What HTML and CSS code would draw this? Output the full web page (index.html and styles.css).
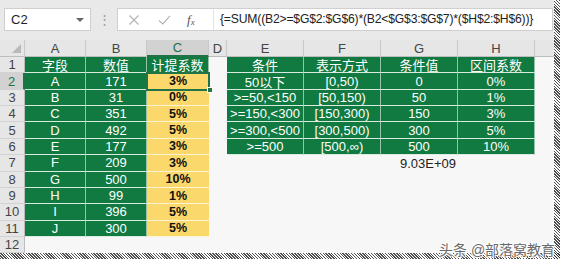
FILE: index.html
```html
<!DOCTYPE html>
<html>
<head>
<meta charset="utf-8">
<link rel="stylesheet" href="styles.css">
</head>
<body>
<div class="frame">
  <div class="toolbar">
    <div class="namebox"><span>C2</span><span class="caret"></span></div>
    <div class="grip">⋮</div>
    <div class="fbar">
      <div class="fbtns">
        <svg class="ico" width="12" height="12" viewBox="0 0 12 12"><path d="M1.5 1.5 L10.5 10.5 M10.5 1.5 L1.5 10.5" stroke="#b4b4b4" stroke-width="1.2" fill="none"/></svg>
        <svg class="ico" width="13" height="12" viewBox="0 0 13 12"><path d="M1 6.5 L4.8 10 L12 1.8" stroke="#b4b4b4" stroke-width="1.2" fill="none"/></svg>
        <span class="fx">f<sub>x</sub></span>
      </div>
      <div class="formula">{=SUM((B2&gt;=$G$2:$G$6)*(B2&lt;$G$3:$G$7)*($H$2:$H$6))}</div>
    </div>
  </div>
  <div class="sheet">
    <div class="ch corner"><span class="tri"></span></div>
    <div class="ch">A</div><div class="ch">B</div><div class="ch sel">C</div><div class="ch">D</div>
    <div class="ch">E</div><div class="ch">F</div><div class="ch">G</div><div class="ch">H</div><div class="ch last"></div>

    <div class="rh">1</div>
    <div class="g">字段</div><div class="g">数值</div><div class="g">计提系数</div><div class="e"></div>
    <div class="t">条件</div><div class="t">表示方式</div><div class="t">条件值</div><div class="t">区间系数</div><div class="e"></div>

    <div class="rh sel">2</div>
    <div class="g">A</div><div class="g">171</div><div class="y cur">3%<span class="handle"></span></div><div class="e"></div>
    <div class="t">50以下</div><div class="t">[0,50)</div><div class="t">0</div><div class="t">0%</div><div class="e"></div>

    <div class="rh">3</div>
    <div class="g">B</div><div class="g">31</div><div class="y">0%</div><div class="e"></div>
    <div class="t">&gt;=50,&lt;150</div><div class="t">[50,150)</div><div class="t">50</div><div class="t">1%</div><div class="e"></div>

    <div class="rh">4</div>
    <div class="g">C</div><div class="g">351</div><div class="y">5%</div><div class="e"></div>
    <div class="t">&gt;=150,&lt;300</div><div class="t">[150,300)</div><div class="t">150</div><div class="t">3%</div><div class="e"></div>

    <div class="rh">5</div>
    <div class="g">D</div><div class="g">492</div><div class="y">5%</div><div class="e"></div>
    <div class="t">&gt;=300,&lt;500</div><div class="t">[300,500)</div><div class="t">300</div><div class="t">5%</div><div class="e"></div>

    <div class="rh">6</div>
    <div class="g">E</div><div class="g">177</div><div class="y">3%</div><div class="e"></div>
    <div class="t">&gt;=500</div><div class="t">[500,∞)</div><div class="t">500</div><div class="t">10%</div><div class="e"></div>

    <div class="rh">7</div>
    <div class="g">F</div><div class="g">209</div><div class="y">3%</div><div class="e"></div>
    <div class="e"></div><div class="e"></div><div class="e num">9.03E+09</div><div class="e"></div><div class="e"></div>

    <div class="rh">8</div>
    <div class="g">G</div><div class="g">500</div><div class="y">10%</div><div class="e"></div>
    <div class="e"></div><div class="e"></div><div class="e"></div><div class="e"></div><div class="e"></div>

    <div class="rh">9</div>
    <div class="g">H</div><div class="g">99</div><div class="y">1%</div><div class="e"></div>
    <div class="e"></div><div class="e"></div><div class="e"></div><div class="e"></div><div class="e"></div>

    <div class="rh">10</div>
    <div class="g">I</div><div class="g">396</div><div class="y">5%</div><div class="e"></div>
    <div class="e"></div><div class="e"></div><div class="e"></div><div class="e"></div><div class="e"></div>

    <div class="rh">11</div>
    <div class="g">J</div><div class="g">300</div><div class="y">5%</div><div class="e"></div>
    <div class="e"></div><div class="e"></div><div class="e"></div><div class="e"></div><div class="e"></div>

    <div class="rh">12</div>
    <div class="e"></div><div class="e"></div><div class="e"></div><div class="e"></div>
    <div class="e"></div><div class="e"></div><div class="e"></div><div class="e"></div><div class="e"></div>
  </div>
  <div class="watermark">头条 @部落窝教育</div>
</div>
</body>
</html>
```

FILE: styles.css
```css
* { box-sizing: border-box; }
html, body { margin: 0; padding: 0; background: #ffffff; }
body {
  width: 565px; height: 264px; overflow: hidden;
  font-family: "Liberation Sans", "Noto Sans CJK SC", sans-serif;
}
.frame {
  position: relative;
  width: 565px; height: 264px;
  background: #ffffff;
}
.frame::before {
  content: ""; position: absolute; left: 554px; top: 0; width: 6px; height: 259px;
  background: repeating-linear-gradient(45deg, #222 0 1px, #fff 1px 2px);
  opacity: 0.8;
}
.frame::after {
  content: ""; position: absolute; left: 0; top: 253px; width: 560px; height: 6px;
  background: repeating-linear-gradient(45deg, #222 0 1px, #fff 1px 2px);
  opacity: 0.8;
}
.toolbar {
  width: 554px; height: 40px;
  background: #e9e9e9;
  display: flex; align-items: flex-start;
  padding-top: 8px;
}
.namebox {
  margin-left: 4px; width: 87px; height: 23px;
  background: #fff; border: 1px solid #cfcfcf;
  display: flex; align-items: center; justify-content: space-between;
  padding: 0 6px 0 6px;
  font-size: 13px; color: #222;
}
.caret {
  width: 0; height: 0;
  border-left: 4px solid transparent; border-right: 4px solid transparent;
  border-top: 4px solid #666;
}
.grip { width: 26px; text-align: center; color: #999; font-size: 13px; line-height: 23px; }
.fbar {
  width: 436px; height: 23px;
  background: #fff; border: 1px solid #cfcfcf;
  display: flex;
}
.fbtns {
  width: 96px; display: flex; align-items: center;
  padding-left: 10px;
  border-right: 1px solid #e2e2e2;
}
.fbtns .ico:first-child { margin-right: 18px; }
.fbtns .ico + .ico { margin-right: 16px; }
.fx { font-family: "Liberation Serif", serif; font-style: italic; font-size: 13px; color: #555; }
.fx sub { font-size: 9px; vertical-align: -1px; }
.formula {
  padding-left: 6px; line-height: 21px;
  font-size: 12.2px; letter-spacing: -0.2px; color: #222; white-space: nowrap;
}
.sheet {
  width: 554px;
  display: grid;
  grid-template-columns: 25px 61px 61px 62px 18px 77px 77px 77px 77px 19px;
  grid-template-rows: 17px repeat(12, 16.36px);
  background: #f7f7f7;
  font-size: 13px;
}
.ch {
  background: #e6e6e6; color: #444;
  border-right: 1px solid #c9c9c9; border-bottom: 1px solid #bdbdbd;
  display: flex; align-items: center; justify-content: center;
  font-size: 13px;
}
.ch.last { border-right: none; }
.ch.sel { background: #d2d2d2; color: #217346; border-bottom: 2px solid #217346; }
.corner { position: relative; }
.tri {
  position: absolute; right: 3px; bottom: 3px; width: 0; height: 0;
  border-left: 9px solid transparent; border-bottom: 9px solid #b9b9b9;
}
.rh {
  background: #e6e6e6; color: #444;
  border-right: 1px solid #bdbdbd; border-bottom: 1px solid #d2d2d2;
  display: flex; align-items: center; justify-content: center;
  font-size: 13px;
}
.rh.sel { background: #d2d2d2; color: #217346; border-right: 2px solid #217346; }
.g, .t {
  background: #117a41; color: #fff;
  display: flex; align-items: center; justify-content: center;
  border-right: 1px solid rgba(255,255,255,0.55);
  border-bottom: 1px solid rgba(255,255,255,0.85);
  white-space: nowrap;
}
.y {
  background: #fbd86b; color: #111; font-weight: bold; font-size: 12.5px;
  display: flex; align-items: center; justify-content: center;
  border-bottom: 1px solid rgba(255,255,255,0.7);
  position: relative;
}
.y.cur { outline: 2px solid #217346; outline-offset: -1px; z-index: 2; }
.handle {
  position: absolute; right: -4px; bottom: -4px; width: 6px; height: 6px;
  background: #217346; border: 1px solid #fff;
}
.e { background: #f7f7f7; }
.num {
  display: flex; align-items: center; justify-content: flex-end;
  padding-right: 2px; color: #222; font-size: 13px;
}
.watermark {
  position: absolute; left: 439px; top: 239px;
  font-size: 14px; color: #6a6a6a; white-space: nowrap;
  text-shadow: 1px 1px 0 #fff, -1px -1px 0 #fff, 1px -1px 0 #fff, -1px 1px 0 #fff;
  z-index: 3;
}
```
